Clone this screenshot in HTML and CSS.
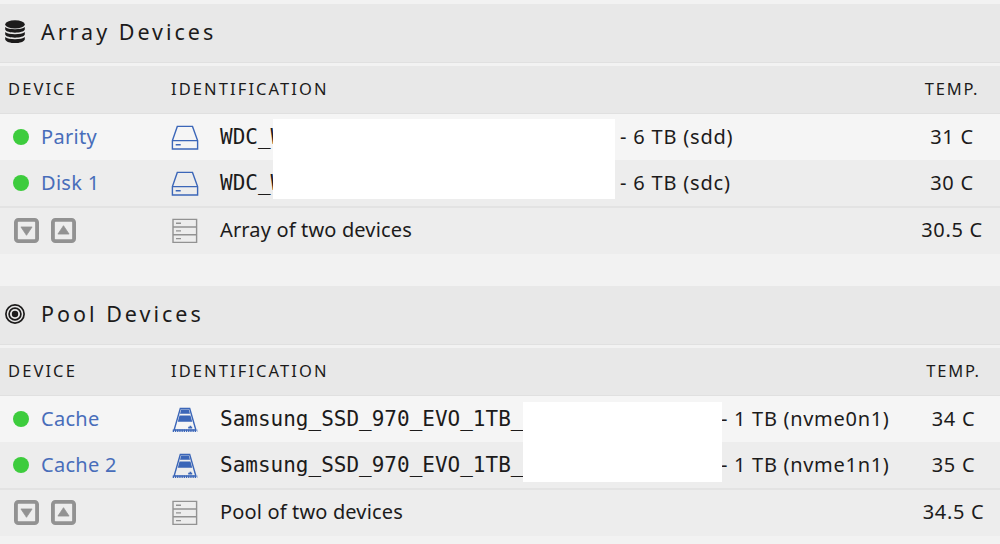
FILE: index.html
```html
<!DOCTYPE html>
<html lang="en">
<head>
  <meta charset="UTF-8">
  <meta name="viewport" content="width=device-width, initial-scale=1.0">
  <title>Main</title>
  <link rel="stylesheet" href="styles.css">
</head>
<body>
  <!-- shared device icons -->
  <svg class="symbols" width="0" height="0">
    <symbol id="icon-disk" viewBox="0 0 28 26">
      <path d="M6.3 1.400h15.200l5.100 14.200v8.400H1.400v-8.400zM1.400 15.600h25.200M4.700 19.800h5" fill="none" stroke="currentColor" stroke-width="1.400"/>
    </symbol>
    <symbol id="icon-nvme" viewBox="0 0 28 26">
      <path d="M9.300 1.500h9.400l6.200 21.500H3.100z" fill="none" stroke="currentColor" stroke-width="1.400"/>
      <path d="M10.200 2.600h7.600l1.200 4.200H9zM8.500 8.500h11l1.700 6.200H6.800zM17.200 21.500v-1.700h1.400v-1h1.600v1h1v1.700z" fill="currentColor"/>
      <path d="M1.700 23.800h24.600" fill="none" stroke="currentColor" stroke-width="2.600" stroke-dasharray="1.300 .9"/>
    </symbol>
    <symbol id="icon-server" viewBox="0 0 28 26">
      <path d="M2 1.400h23.600v23H2zM2 9h23.600M2 16.700h23.600M5 5.200h5M5 12.900h5M5 20.600h5" fill="none" stroke="currentColor" stroke-width="1.400"/>
    </symbol>
    <symbol id="icon-down" viewBox="0 0 26 26">
      <rect x="2" y="2" width="22" height="22" rx="2.500" fill="none" stroke="currentColor" stroke-width="4"/>
      <path d="M7.200 9.300h11.600L13 18z" fill="currentColor" stroke="currentColor" stroke-width=".8" stroke-linejoin="round"/>
    </symbol>
    <symbol id="icon-up" viewBox="0 0 26 26">
      <rect x="2" y="2" width="22" height="22" rx="2.500" fill="none" stroke="currentColor" stroke-width="4"/>
      <path d="M7.200 16.700h11.600L13 8z" fill="currentColor" stroke="currentColor" stroke-width=".8" stroke-linejoin="round"/>
    </symbol>
  </svg>

  <section class="devices array">
    <h2 class="title">
      <svg class="title-icon" viewBox="0 0 20 24">
        <ellipse cx="10" cy="4.400" rx="9.800" ry="4.100"/>
        <path d="M.2 7.100c3 3 16.600 3 19.600 0v2.500c-1.500 4.200-18.100 4.200-19.600 0zM.2 12c3 3 16.600 3 19.600 0v2.500c-1.500 4.200-18.100 4.200-19.600 0zM.2 16.900c3 3 16.600 3 19.600 0v2.500c-1.500 4.800-18.100 4.800-19.600 0z"/>
      </svg>
      <span>Array Devices</span>
    </h2>
    <div class="row head">
      <span>Device</span>
      <span>Identification</span>
      <span class="temp">Temp.</span>
    </div>
    <div class="row">
      <a class="name"><i class="dot"></i>Parity</a>
      <div class="ident">
        <svg class="icon"><use href="#icon-disk"/></svg>
        <span class="serial">WDC_W</span>
        <span class="size">- 6 TB (sdd)</span>
      </div>
      <span class="temp">31 C</span>
    </div>
    <div class="row odd">
      <a class="name"><i class="dot"></i>Disk 1</a>
      <div class="ident">
        <svg class="icon"><use href="#icon-disk"/></svg>
        <span class="serial">WDC_W</span>
        <span class="size">- 6 TB (sdc)</span>
      </div>
      <span class="temp">30 C</span>
    </div>
    <div class="row total">
      <div class="toggles">
        <svg class="toggle"><use href="#icon-down"/></svg>
        <svg class="toggle"><use href="#icon-up"/></svg>
      </div>
      <div class="ident">
        <svg class="icon gray"><use href="#icon-server"/></svg>
        <span class="label">Array of two devices</span>
      </div>
      <span class="temp">30.5 C</span>
    </div>
    <div class="mask"></div>
  </section>

  <section class="devices pool">
    <h2 class="title">
      <svg class="title-icon" viewBox="0 0 20 24">
        <g fill="none" stroke="currentColor">
          <circle cx="10" cy="12" r="9.100" stroke-width="1.700"/>
          <circle cx="10" cy="12" r="5.900" stroke-width="1.700"/>
        </g>
        <circle cx="10" cy="12" r="3.200"/>
      </svg>
      <span>Pool Devices</span>
    </h2>
    <div class="row head">
      <span>Device</span>
      <span>Identification</span>
      <span class="temp">Temp.</span>
    </div>
    <div class="row">
      <a class="name"><i class="dot"></i>Cache</a>
      <div class="ident">
        <svg class="icon"><use href="#icon-nvme"/></svg>
        <span class="serial">Samsung_SSD_970_EVO_1TB_</span>
        <span class="size">- 1 TB (nvme0n1)</span>
      </div>
      <span class="temp">34 C</span>
    </div>
    <div class="row odd">
      <a class="name"><i class="dot"></i>Cache 2</a>
      <div class="ident">
        <svg class="icon"><use href="#icon-nvme"/></svg>
        <span class="serial">Samsung_SSD_970_EVO_1TB_</span>
        <span class="size">- 1 TB (nvme1n1)</span>
      </div>
      <span class="temp">35 C</span>
    </div>
    <div class="row total">
      <div class="toggles">
        <svg class="toggle"><use href="#icon-down"/></svg>
        <svg class="toggle"><use href="#icon-up"/></svg>
      </div>
      <div class="ident">
        <svg class="icon gray"><use href="#icon-server"/></svg>
        <span class="label">Pool of two devices</span>
      </div>
      <span class="temp">34.5 C</span>
    </div>
    <div class="mask"></div>
  </section>
</body>
</html>
```
FILE: styles.css
```css
* {
  box-sizing: border-box;
}

body {
  margin: 0;
  padding-top: 4px;
  height: 544px;
  overflow: hidden;
  background-color: #f2f2f2;
  color: #1c1b1b;
  font-family: "Noto Sans", sans-serif;
  font-size: 20px;
  line-height: 28px;
}

.symbols {
  display: block;
}

.devices {
  position: relative;
  margin-bottom: 32px;
}

.title {
  display: flex;
  align-items: center;
  height: 59px;
  margin: 0 0 3px;
  padding: 0 0 2px 5px;
  background-color: #e8e8e8;
  border-bottom: 1px solid #e0e0e0;
  font-size: 21.5px;
  font-weight: normal;
  letter-spacing: 3px;
}

.title-icon {
  width: 20px;
  height: 24px;
  margin-right: 16px;
  fill: currentColor;
}

.row {
  display: grid;
  grid-template-columns: 171px 1fr 96px;
  align-items: center;
  height: 46px;
  background-color: #f5f5f5;
}

.head {
  height: 48px;
  padding-bottom: 1px;
  background-color: #e8e8e8;
  border-bottom: 1px solid #e0e0e0;
  font-size: 16.5px;
  letter-spacing: 2.1px;
  text-transform: uppercase;
}

.head span:first-child {
  padding-left: 8px;
}

.odd {
  background-color: #ededed;
}

.total {
  height: 48px;
  padding-bottom: 2px;
  background-color: #ededed;
  border-top: 2px solid #e3e3e3;
}

.name {
  display: flex;
  align-items: center;
  padding-left: 13px;
  color: #486dba;
  letter-spacing: 0.3px;
}

.dot {
  width: 16px;
  height: 16px;
  margin-right: 12px;
  border-radius: 50%;
  background-color: #3dcc3d;
}

.ident {
  display: flex;
  align-items: center;
}

.icon {
  flex: none;
  width: 28px;
  height: 26px;
  margin: 2px 21px 0 0;
  color: #3b66b8;
}

.gray {
  color: #929292;
}

.label {
  letter-spacing: 0.15px;
}

.serial {
  flex: none;
  width: 400px;
  font-family: "DejaVu Sans Mono", monospace;
  font-size: 21px;
}

.pool .serial {
  width: 501px;
}

.size {
  letter-spacing: 0.8px;
  white-space: nowrap;
}

.pool .size {
  letter-spacing: 0.7px;
}

.temp {
  text-align: center;
  letter-spacing: 0.7px;
}

.head .temp {
  letter-spacing: 1.8px;
}

.pool .temp {
  padding-left: 3px;
}

.toggles {
  display: flex;
  gap: 12px;
  padding-left: 14px;
}

.toggle {
  width: 25px;
  height: 25px;
  color: #929292;
}

/* hides the serial numbers of both disks */
.mask {
  position: absolute;
  top: 115px;
  left: 273px;
  width: 342px;
  height: 80px;
  background-color: #fff;
}

.pool .mask {
  top: 116px;
  left: 523px;
  width: 199px;
}
```
